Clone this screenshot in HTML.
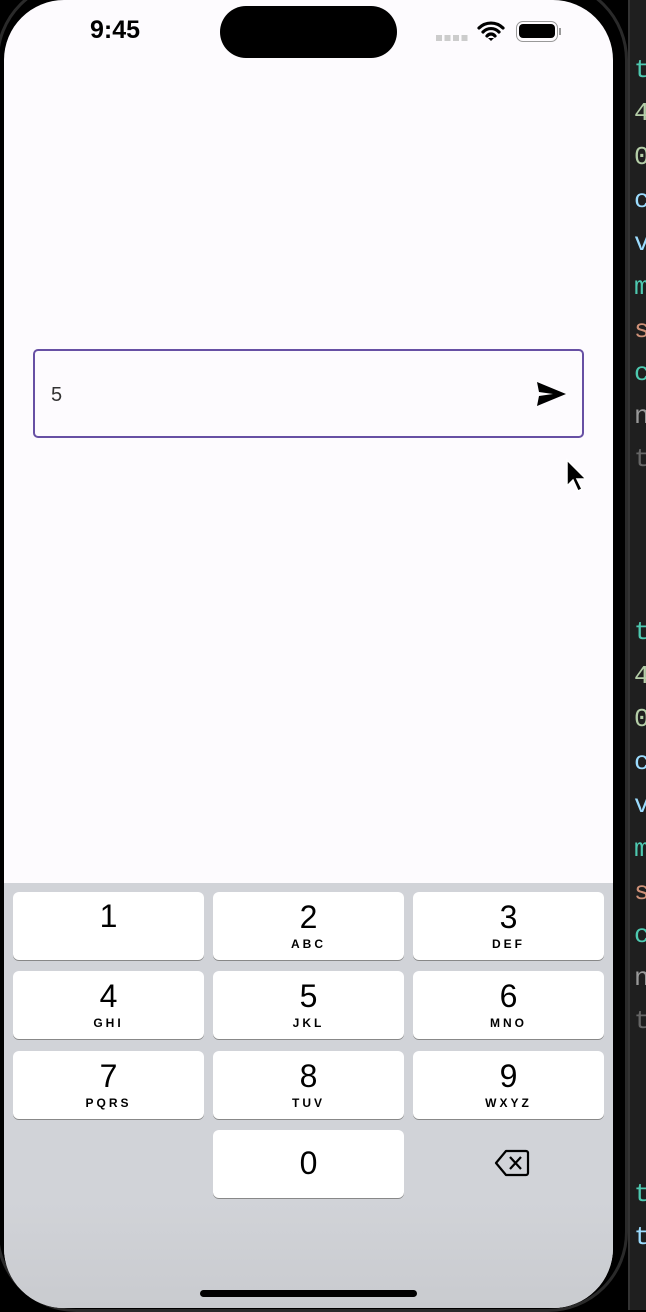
<!DOCTYPE html>
<html><head><style>
*{margin:0;padding:0;box-sizing:border-box}
body{width:646px;height:1310px;background:#000;position:relative;overflow:hidden;font-family:"Liberation Sans",sans-serif}
.code{position:absolute;left:628px;top:0;width:18px;height:1310px;background:#1f1f1f;border-left:2px solid #333}
.code span{position:absolute;left:4px;font:26px "Liberation Mono",monospace;line-height:30px}
.frame{position:absolute;left:-4px;top:-20px;width:632px;height:1332px;border-radius:80px;background:#000;border:3px solid #2a2a2a}
.screen{position:absolute;left:4px;top:0;width:609px;height:1308px;background:#fdfbfe;border-radius:60px;overflow:hidden}
.island{position:absolute;left:220px;top:6px;width:177px;height:52px;background:#000;border-radius:26px}
.time{position:absolute;left:90px;top:16px;font-size:25px;font-weight:bold;color:#000}
.field{position:absolute;left:33px;top:349px;width:551px;height:89px;border:2.5px solid #6750a4;border-radius:5px}
.field .v{position:absolute;left:16px;top:33px;font-size:20px;color:#333}
.kb{position:absolute;left:0;top:883px;width:609px;height:425px;background:linear-gradient(#d1d3d8 75%,#c9cbcf)}
.k{position:absolute;width:191px;height:68px;background:#fff;border-radius:6px;box-shadow:0 1px 0 #888;text-align:center}
.k b{display:block;font-weight:normal;font-size:32px;line-height:32px;margin-top:9px;color:#000}
.k i{display:block;font-style:normal;font-weight:bold;font-size:12px;letter-spacing:3px;margin-top:4px;color:#000}
.home{position:absolute;left:200px;top:1290px;width:217px;height:7px;background:#000;border-radius:4px}
</style></head><body>
<div class="code">
<span style="top:55px;color:#4ec9b0">t</span><span style="top:98px;color:#b5cea8">4</span><span style="top:142px;color:#b5cea8">0</span><span style="top:185px;color:#9cdcfe">c</span><span style="top:228px;color:#9cdcfe">v</span><span style="top:272px;color:#4ec9b0">m</span><span style="top:315px;color:#ce9178">s</span><span style="top:358px;color:#4ec9b0">c</span><span style="top:401px;color:#999">n</span><span style="top:444px;color:#666">t</span>
<span style="top:617px;color:#4ec9b0">t</span><span style="top:661px;color:#b5cea8">4</span><span style="top:704px;color:#b5cea8">0</span><span style="top:747px;color:#9cdcfe">c</span><span style="top:790px;color:#9cdcfe">v</span><span style="top:834px;color:#4ec9b0">m</span><span style="top:877px;color:#ce9178">s</span><span style="top:920px;color:#4ec9b0">c</span><span style="top:963px;color:#999">n</span><span style="top:1006px;color:#666">t</span>
<span style="top:1179px;color:#4ec9b0">t</span><span style="top:1222px;color:#9cdcfe">t</span>
</div>
<div class="frame"></div>
<div class="screen"><div class="kb"></div></div>
<div class="island"></div>
<div class="time">9:45</div>
<div style="position:absolute;left:436px;top:35px;width:32px;height:6px;background:repeating-linear-gradient(90deg,#ccc 0 6px,transparent 6px 8.5px)"></div>
<svg style="position:absolute;left:477px;top:20px" width="28" height="22" viewBox="0 0 28 22"><path d="M2 8a17 17 0 0 1 24 0M6 12a11 11 0 0 1 16 0M10 16a5 5 0 0 1 8 0" stroke="#000" stroke-width="3.2" fill="none" stroke-linecap="round"/><path d="M11 18l3 3 3-3z" fill="#000"/></svg>
<div style="position:absolute;left:516px;top:21px;width:42px;height:21px;border:1.5px solid #999;border-radius:7px"><div style="margin:2px;height:14px;background:#000;border-radius:4px"></div></div>
<div style="position:absolute;left:559px;top:28px;width:2px;height:7px;background:#999"></div>
<div class="field"><span class="v">5</span>
<svg style="position:absolute;left:500px;top:29px" width="32" height="28" viewBox="0 0 32 28"><path d="M2 2L31 14 2 26 4 16 18 14 4 12z" fill="#000"/></svg></div>
<svg style="position:absolute;left:565px;top:458px" width="22" height="36" viewBox="0 0 22 36"><path d="M2 2v26l6-6 5 11 4-2-5-10h9z" fill="#000" stroke="#fff" stroke-width="1.5"/></svg>
<div class="k" style="left:13px;top:892px"><b style="margin-top:8px">1</b></div>
<div class="k" style="left:213px;top:892px"><b>2</b><i>ABC</i></div>
<div class="k" style="left:413px;top:892px"><b>3</b><i>DEF</i></div>
<div class="k" style="left:13px;top:971px"><b>4</b><i>GHI</i></div>
<div class="k" style="left:213px;top:971px"><b>5</b><i>JKL</i></div>
<div class="k" style="left:413px;top:971px"><b>6</b><i>MNO</i></div>
<div class="k" style="left:13px;top:1051px"><b>7</b><i>PQRS</i></div>
<div class="k" style="left:213px;top:1051px"><b>8</b><i>TUV</i></div>
<div class="k" style="left:413px;top:1051px"><b>9</b><i>WXYZ</i></div>
<div class="k" style="left:213px;top:1130px"><b style="margin-top:17px">0</b></div>
<svg style="position:absolute;left:494px;top:1148px" width="36" height="30" viewBox="0 0 36 30"><path d="M12 3H32a2 2 0 0 1 2 2V25a2 2 0 0 1-2 2H12L2 15z" fill="none" stroke="#000" stroke-width="2.2" stroke-linejoin="round"/><path d="M16 9l11 12M27 9L16 21" stroke="#000" stroke-width="2.2"/></svg>
<div class="home"></div>
</body></html>
